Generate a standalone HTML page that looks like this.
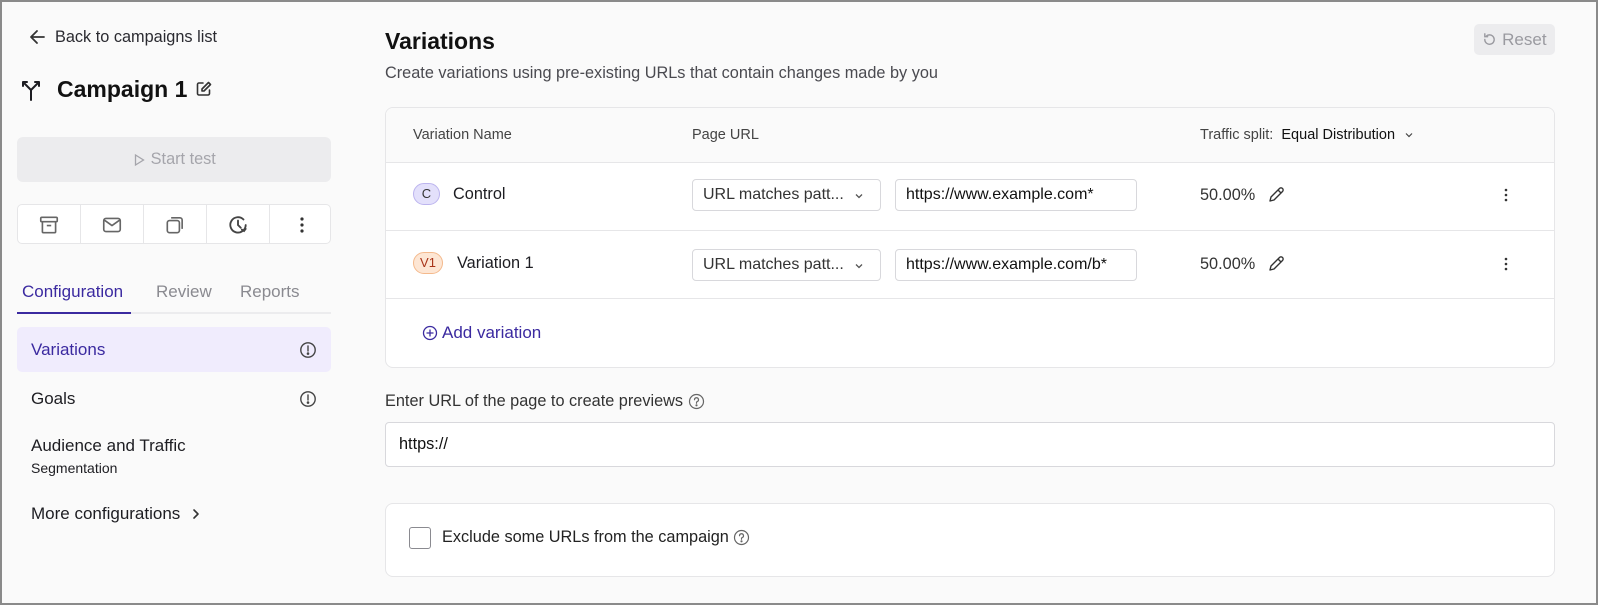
<!DOCTYPE html>
<html><head><meta charset="utf-8"><style>
*{box-sizing:border-box;margin:0;padding:0}
body{width:1600px;height:606px;background:#fff;font-family:"Liberation Sans",sans-serif;color:#1d1d22;position:relative;overflow:hidden}
.frame{position:absolute;left:0;top:0;width:1598px;height:605px;border:2px solid #8a8a8a;background:#fafafa}
.a{position:absolute;white-space:nowrap}
svg{display:block}
.fl{display:flex;align-items:center}
.card{position:absolute;background:#fff;border:1px solid #e6e6e8;border-radius:8px}
.sel{position:absolute;height:32px;border:1px solid #d8d8dc;border-radius:4px;background:#fff;font-size:16px;line-height:30px;padding-left:10px;color:#333;white-space:nowrap}
.cell{position:absolute;top:0;width:63px;height:39px;border-right:1px solid #e6e6e8;display:flex;align-items:center;justify-content:center}
</style></head><body>
<div class="frame"></div>

<svg class="a" style="left:28px;top:28px" width="18" height="18" viewBox="0 0 18 18" fill="none" stroke="#333" stroke-width="1.8" stroke-linecap="round" stroke-linejoin="round"><path d="M16 9H3M9 3L3 9l6 6"/></svg>
<div class="a" style="left:55px;top:28px;font-size:16.3px;color:#2a2a30">Back to campaigns list</div>

<svg class="a" style="left:19px;top:78px" width="24" height="24" viewBox="0 0 24 24" fill="none" stroke="#1d1d22" stroke-width="2" stroke-linecap="round" stroke-linejoin="round"><path d="M12 22V12L4 4M12 12l8-8M4 4h4M4 4v4M20 4h-4M20 4v4"/></svg>
<div class="a" style="left:57px;top:76px;font-size:23px;font-weight:600;color:#111">Campaign 1</div>
<svg class="a" style="left:195px;top:80px" width="18" height="18" viewBox="0 0 18 18" fill="none" stroke="#333" stroke-width="1.6" stroke-linecap="round" stroke-linejoin="round"><path d="M8 3H4a1.5 1.5 0 0 0-1.5 1.5v9A1.5 1.5 0 0 0 4 15h9a1.5 1.5 0 0 0 1.5-1.5V10"/><path d="M13.5 2.5l2 2L9 11H7V9z"/></svg>

<div class="a" style="left:17px;top:137px;width:314px;height:45px;background:#ececee;border-radius:6px;color:#a5a5ab;font-size:16.3px;display:flex;align-items:center;justify-content:center">
<svg width="14" height="14" viewBox="0 0 14 14" fill="none" stroke="#a5a5ab" stroke-width="1.3"><path d="M3.5 2l8 5-8 5z"/></svg>&nbsp;Start test</div>

<div class="a" style="left:17px;top:204px;width:314px;height:40px;background:#fff;border:1px solid #e6e6e8;border-radius:5px;overflow:hidden">
<div class="cell" style="left:0"><svg width="22" height="22" viewBox="0 0 20 20" fill="none" stroke="#666" stroke-width="1.5" stroke-linejoin="round"><rect x="2.5" y="3" width="15" height="4" rx="1"/><path d="M4 7v9a1 1 0 0 0 1 1h10a1 1 0 0 0 1-1V7M8 10.5h4"/></svg></div>
<div class="cell" style="left:63px"><svg width="22" height="22" viewBox="0 0 20 20" fill="none" stroke="#666" stroke-width="1.5" stroke-linejoin="round"><rect x="2.5" y="4" width="15" height="12" rx="2"/><path d="M3 5.5l7 5 7-5"/></svg></div>
<div class="cell" style="left:126px"><svg width="22" height="22" viewBox="0 0 20 20" fill="none" stroke="#666" stroke-width="1.5" stroke-linejoin="round"><rect x="3" y="6" width="11" height="11" rx="2"/><path d="M6.5 3.5h8a2 2 0 0 1 2 2v8"/></svg></div>
<div class="cell" style="left:189px"><svg width="22" height="22" viewBox="0 0 20 20" fill="none" stroke="#444" stroke-width="1.7" stroke-linecap="round"><path d="M17 10a7 7 0 1 1-2-5M10 6v4l2.5 2.5M17 13.5l-1.5 2-2-1.3"/></svg></div>
<div class="cell" style="left:252px;border:none"><svg width="20" height="20" viewBox="0 0 20 20" fill="#333"><circle cx="10" cy="4" r="1.6"/><circle cx="10" cy="10" r="1.6"/><circle cx="10" cy="16" r="1.6"/></svg></div>
</div>

<div class="a" style="left:22px;top:282px;font-size:17px;color:#3b2aa0">Configuration</div>
<div class="a" style="left:156px;top:282px;font-size:17px;color:#8a8a90">Review</div>
<div class="a" style="left:240px;top:282px;font-size:17px;color:#8a8a90">Reports</div>
<div class="a" style="left:17px;top:312px;width:314px;height:2px;background:#ececee"></div>
<div class="a" style="left:17px;top:312px;width:114px;height:2px;background:#3b2aa0"></div>

<div class="a" style="left:17px;top:327px;width:314px;height:45px;background:#f0ecfd;border-radius:5px"></div>
<div class="a" style="left:31px;top:340px;font-size:17px;color:#3b2aa0">Variations</div>
<svg class="a" style="left:299px;top:341px" width="18" height="18" viewBox="0 0 18 18" fill="none" stroke="#444" stroke-width="1.4"><circle cx="9" cy="9" r="7.2"/><path d="M9 5v5" stroke-linecap="round"/><circle cx="9" cy="12.6" r=".6" fill="#444"/></svg>
<div class="a" style="left:31px;top:389px;font-size:17px">Goals</div>
<svg class="a" style="left:299px;top:390px" width="18" height="18" viewBox="0 0 18 18" fill="none" stroke="#444" stroke-width="1.4"><circle cx="9" cy="9" r="7.2"/><path d="M9 5v5" stroke-linecap="round"/><circle cx="9" cy="12.6" r=".6" fill="#444"/></svg>
<div class="a" style="left:31px;top:436px;font-size:17px">Audience and Traffic</div>
<div class="a" style="left:31px;top:460px;font-size:14px">Segmentation</div>
<div class="a fl" style="left:31px;top:504px;font-size:17px">More configurations&nbsp;&nbsp;<svg width="12" height="14" viewBox="0 0 12 14" fill="none" stroke="#333" stroke-width="1.6" stroke-linecap="round" stroke-linejoin="round"><path d="M4 3l4 4-4 4"/></svg></div>

<div class="a" style="left:385px;top:28px;font-size:23px;font-weight:600;color:#111">Variations</div>
<div class="a" style="left:385px;top:64px;font-size:16.3px;color:#4a4a50">Create variations using pre-existing URLs that contain changes made by you</div>
<div class="a" style="left:1474px;top:24px;width:81px;height:31px;background:#ececee;border-radius:5px;color:#9a9aa0;font-size:17px;display:flex;align-items:center;justify-content:center">
<svg width="15" height="15" viewBox="0 0 16 16" fill="none" stroke="#9a9aa0" stroke-width="1.5" stroke-linecap="round"><path d="M3 8a5 5 0 1 0 1.5-3.5M3 2v3h3"/></svg>&nbsp;Reset</div>

<div class="card" style="left:385px;top:107px;width:1170px;height:261px;overflow:hidden">
<div class="a" style="left:0;top:0;width:100%;height:55px;background:#fafafa;border-bottom:1px solid #e6e6e8"></div>
<div class="a" style="left:27px;top:19px;font-size:14.5px;color:#444">Variation Name</div>
<div class="a" style="left:306px;top:19px;font-size:14.5px;color:#444">Page URL</div>
<div class="a fl" style="left:814px;top:19px;font-size:14.5px;color:#444">Traffic split:&nbsp;&nbsp;<span style="color:#111">Equal Distribution</span>&nbsp;&nbsp;<svg width="12" height="12" viewBox="0 0 12 12" fill="none" stroke="#444" stroke-width="1.2"><path d="M3 4.5l3 3 3-3"/></svg></div>
<div class="a" style="left:0;top:122px;width:100%;height:1px;background:#e6e6e8"></div>
<div class="a" style="left:0;top:190px;width:100%;height:1px;background:#e6e6e8"></div>
</div>

<div class="a" style="left:413px;top:183px;width:27px;height:22px;border-radius:11px;background:#e3e0fb;border:1px solid #bcb4ee;font-size:13px;color:#333;text-align:center;line-height:20px">C</div>
<div class="a" style="left:453px;top:185px;font-size:16.3px">Control</div>
<div class="sel" style="left:692px;top:179px;width:189px">URL matches patt...</div>
<svg class="a" style="left:853px;top:190px" width="12" height="12" viewBox="0 0 12 12" fill="none" stroke="#555" stroke-width="1.3"><path d="M3 4.5l3 3 3-3"/></svg>
<div class="sel" style="left:895px;top:179px;width:242px;color:#111">https://www.example.com*</div>
<div class="a" style="left:1200px;top:186px;font-size:16.3px;color:#333">50.00%</div>
<svg class="a" style="left:1267px;top:186px" width="18" height="18" viewBox="0 0 18 18" fill="none" stroke="#333" stroke-width="1.4" stroke-linejoin="round"><path d="M3 15l1-4 8.5-8.5a2 2 0 0 1 3 3L7 14z M11 4l3 3"/></svg>
<svg class="a" style="left:1499px;top:186px" width="14" height="18" viewBox="0 0 14 18" fill="#333"><circle cx="7" cy="4" r="1.3"/><circle cx="7" cy="9" r="1.3"/><circle cx="7" cy="14" r="1.3"/></svg>

<div class="a" style="left:413px;top:252px;width:30px;height:22px;border-radius:11px;background:#fde6d4;border:1px solid #f4b98c;font-size:13px;color:#a8341a;text-align:center;line-height:20px">V1</div>
<div class="a" style="left:457px;top:254px;font-size:16.3px">Variation 1</div>
<div class="sel" style="left:692px;top:249px;width:189px">URL matches patt...</div>
<svg class="a" style="left:853px;top:260px" width="12" height="12" viewBox="0 0 12 12" fill="none" stroke="#555" stroke-width="1.3"><path d="M3 4.5l3 3 3-3"/></svg>
<div class="sel" style="left:895px;top:249px;width:242px;color:#111">https://www.example.com/b*</div>
<div class="a" style="left:1200px;top:255px;font-size:16.3px;color:#333">50.00%</div>
<svg class="a" style="left:1267px;top:255px" width="18" height="18" viewBox="0 0 18 18" fill="none" stroke="#333" stroke-width="1.4" stroke-linejoin="round"><path d="M3 15l1-4 8.5-8.5a2 2 0 0 1 3 3L7 14z M11 4l3 3"/></svg>
<svg class="a" style="left:1499px;top:255px" width="14" height="18" viewBox="0 0 14 18" fill="#333"><circle cx="7" cy="4" r="1.3"/><circle cx="7" cy="9" r="1.3"/><circle cx="7" cy="14" r="1.3"/></svg>

<svg class="a" style="left:422px;top:325px" width="16" height="16" viewBox="0 0 16 16" fill="none" stroke="#3b2aa0" stroke-width="1.3" stroke-linecap="round"><circle cx="8" cy="8" r="6.5"/><path d="M8 5v6M5 8h6"/></svg>
<div class="a" style="left:442px;top:323px;font-size:17px;color:#3b2aa0">Add variation</div>

<div class="a fl" style="left:385px;top:392px;font-size:16.3px;color:#333">Enter URL of the page to create previews&nbsp;<svg width="17" height="17" viewBox="0 0 17 17" fill="none" stroke="#666" stroke-width="1.2"><circle cx="8.5" cy="8.5" r="7"/><path d="M6.5 6.7a2 2 0 1 1 2.7 1.9c-.5.2-.7.6-.7 1.1v.6" stroke-linecap="round"/><circle cx="8.5" cy="12.3" r=".5" fill="#666"/></svg></div>
<div class="a" style="left:385px;top:422px;width:1170px;height:45px;background:#fff;border:1px solid #d8d8dc;border-radius:4px;font-size:16.3px;line-height:43px;padding-left:13px;color:#111">https://</div>

<div class="card" style="left:385px;top:503px;width:1170px;height:74px"></div>
<div class="a" style="left:409px;top:527px;width:22px;height:22px;border:1.5px solid #8a8a90;border-radius:3px;background:#fff"></div>
<div class="a fl" style="left:442px;top:528px;font-size:16.3px;color:#222">Exclude some URLs from the campaign&nbsp;<svg width="17" height="17" viewBox="0 0 17 17" fill="none" stroke="#666" stroke-width="1.2"><circle cx="8.5" cy="8.5" r="7"/><path d="M6.5 6.7a2 2 0 1 1 2.7 1.9c-.5.2-.7.6-.7 1.1v.6" stroke-linecap="round"/><circle cx="8.5" cy="12.3" r=".5" fill="#666"/></svg></div>
</body></html>
